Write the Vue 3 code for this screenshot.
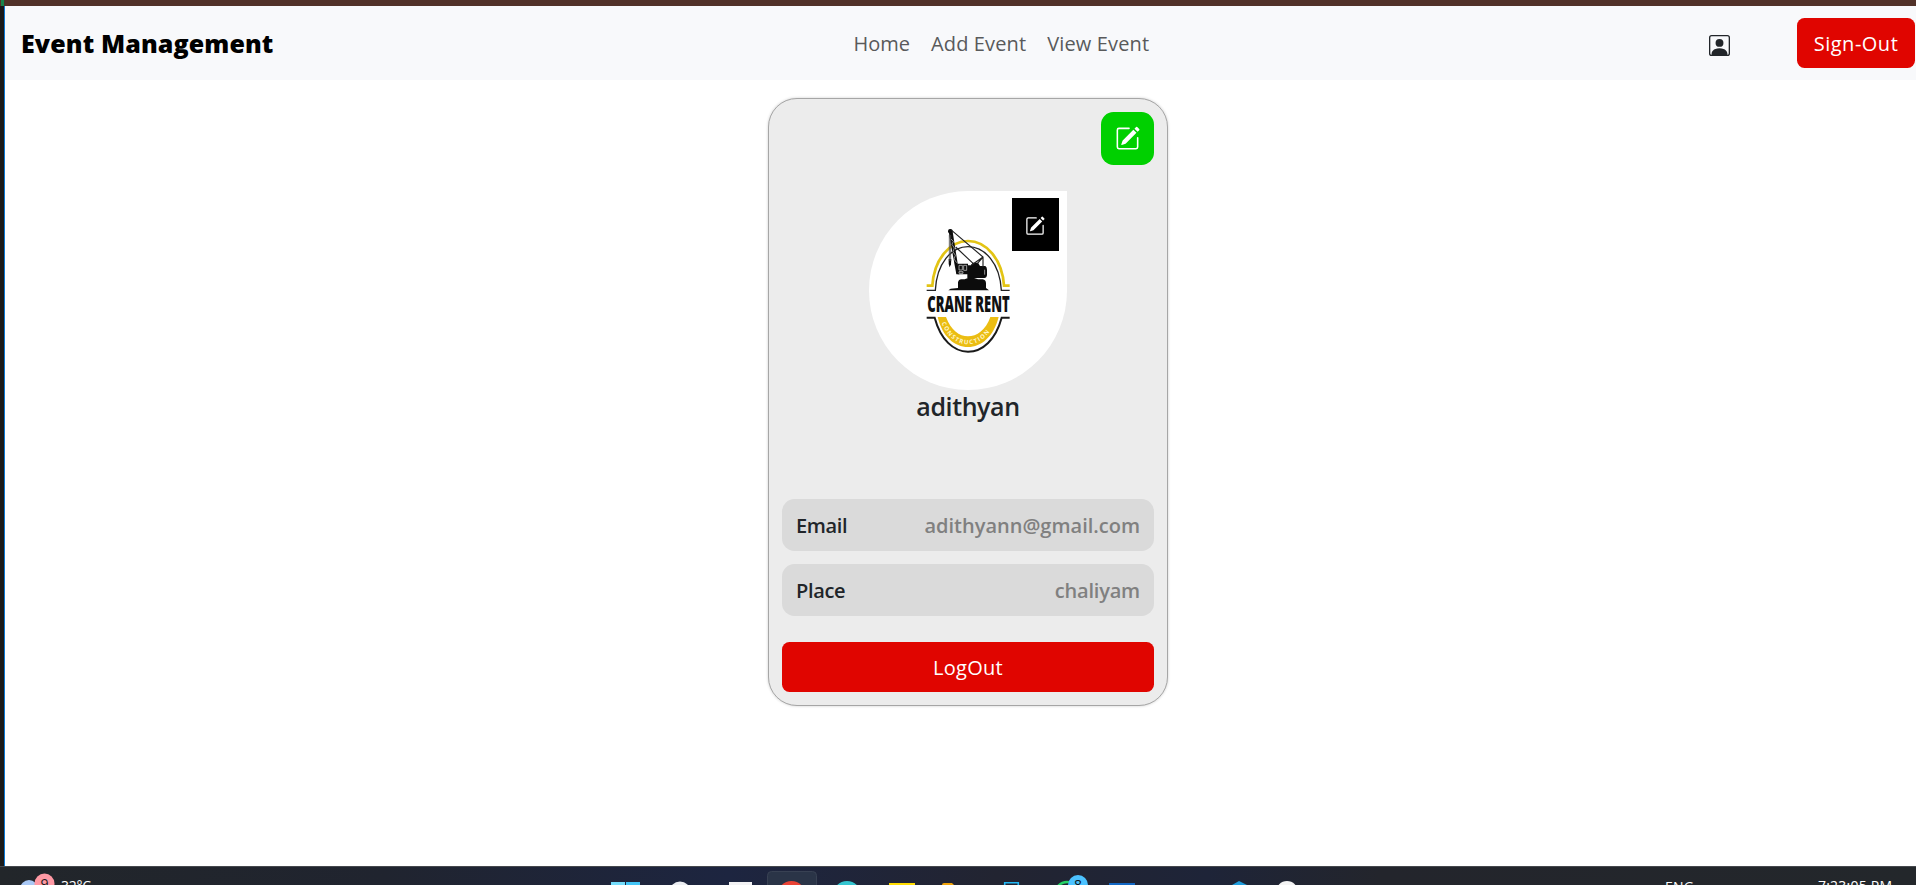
<script setup>
const links = [
  { label: 'Home', cls: 'home' },
  { label: 'Add Event', cls: 'add' },
  { label: 'View Event', cls: 'view' },
]
const fields = [
  { label: 'Email', value: 'adithyann@gmail.com', cls: 'email' },
  { label: 'Place', value: 'chaliyam', cls: 'place' },
]
</script>

<template>
  <div class="screen">
    <div class="tabstrip"><i class="tab-mark"></i></div>
    <div class="middle">
      <div class="edge"></div>
      <main class="page">
        <nav class="navbar">
          <span class="brand">Event Management</span>
          <div class="links">
            <a v-for="l in links" :key="l.label" :class="l.cls">{{ l.label }}</a>
          </div>
          <div class="account">
            <svg class="person" viewBox="0 0 16 16" fill="currentColor">
              <path d="M11 6a3 3 0 1 1-6 0 3 3 0 0 1 6 0" />
              <path d="M2 0a2 2 0 0 0-2 2v12a2 2 0 0 0 2 2h12a2 2 0 0 0 2-2V2a2 2 0 0 0-2-2zm12 1a1 1 0 0 1 1 1v12a1 1 0 0 1-1 1v-1c0-1-1-4-6-4s-6 3-6 4v1a1 1 0 0 1-1-1V2a1 1 0 0 1 1-1z" />
            </svg>
            <button class="btn signout"><span>Sign-Out</span></button>
          </div>
        </nav>

        <section class="card">
          <button class="edit">
            <svg viewBox="0 0 16 16" fill="currentColor">
              <path d="M15.502 1.94a.5.5 0 0 1 0 .706L14.459 3.69l-2-2L13.502.646a.5.5 0 0 1 .707 0l1.293 1.293zm-1.75 2.456-2-2L4.939 9.21a.5.5 0 0 0-.121.196l-.805 2.414a.25.25 0 0 0 .316.316l2.414-.805a.5.5 0 0 0 .196-.12l6.813-6.814z" />
              <path fill-rule="evenodd" d="M1 13.5A1.5 1.5 0 0 0 2.5 15h11a1.5 1.5 0 0 0 1.5-1.5v-6a.5.5 0 0 0-1 0v6a.5.5 0 0 1-.5.5h-11a.5.5 0 0 1-.5-.5v-11a.5.5 0 0 1 .5-.5H9a.5.5 0 0 0 0-1H2.5A1.5 1.5 0 0 0 1 2.5z" />
            </svg>
          </button>
          <div class="avatar">
            <svg class="logo" viewBox="-123 -72 594 597">
              <g fill="none">
                <path d="M50 212H67C72 132 120 78 174 78S277 132 282 212H299" stroke="#e3c414" stroke-width="8" />
                <path d="M50 226H76C80 145 124 95 174 95S270 145 274 226H299" stroke="#222" stroke-width="4" />
                <path d="M50 308H74C92 374 130 410 174 410S257 374 275 308H299" stroke="#1a1a1a" stroke-width="6" />
              </g>
              <path d="M83 306H108C122 345 148 364 174 364S228 345 241 306H266C251 365 214 396 174 396S97 365 83 306Z" fill="#ebbd12" />
              <path id="band" d="M92 318C110 364 140 388 174 388S240 362 257 316" fill="none" />
              <text class="band-text" fill="#fff6c8"><textPath href="#band" startOffset="6" textLength="186">CONSTRUCTION</textPath></text>
              <g fill="#0c0c0c">
                <path d="M115 226 122 221 144 219V202Q146 193 154 193H164L176 188H190L204 193H218Q228 195 228 205V219L237 226Z" />
                <path d="M142 146H174V151H183L188 143H204L210 153H226Q231 156 231 164V180Q230 189 223 189H172L172 178H143Z" />
                <path d="M116 45Q124 38 128 50L148 178H139L118 62Z" />
                <path d="M116 132H124L123 148L119 157L116 147Z" />
                <circle cx="121" cy="49" r="7" />
              </g>
              <g fill="none" stroke="#222" stroke-width="2">
                <path d="M125 46 219 126V156M137 96 190 146M219 126 202 146M219 126 184 151" stroke-width="3.5" />
                <path d="M118 60V138M122 60V138" stroke="#444" stroke-width="2.5" />
                <path d="M123 72 130 79 126 88 133 99 129 110 136 121 132 132 140 143" stroke="#ccc" stroke-width="2" />
                <path d="M147 151H157V165H147ZM161 151H170V166H161ZM147 170H159V175H147ZM224 164V179" stroke="#ddd" />
              </g>
              <text class="logo-text" x="52" y="291" textLength="247" lengthAdjust="spacingAndGlyphs">CRANE RENT</text>
            </svg>
            <button class="photo-edit">
              <svg viewBox="0 0 16 16" fill="currentColor">
                <path d="M15.502 1.94a.5.5 0 0 1 0 .706L14.459 3.69l-2-2L13.502.646a.5.5 0 0 1 .707 0l1.293 1.293zm-1.75 2.456-2-2L4.939 9.21a.5.5 0 0 0-.121.196l-.805 2.414a.25.25 0 0 0 .316.316l2.414-.805a.5.5 0 0 0 .196-.12l6.813-6.814z" />
                <path fill-rule="evenodd" d="M1 13.5A1.5 1.5 0 0 0 2.5 15h11a1.5 1.5 0 0 0 1.5-1.5v-6a.5.5 0 0 0-1 0v6a.5.5 0 0 1-.5.5h-11a.5.5 0 0 1-.5-.5v-11a.5.5 0 0 1 .5-.5H9a.5.5 0 0 0 0-1H2.5A1.5 1.5 0 0 0 1 2.5z" />
              </svg>
            </button>
          </div>
          <h2 class="name">adithyan</h2>
          <div class="fields">
            <div v-for="f in fields" :key="f.label" class="field" :class="f.cls">
              <span class="label">{{ f.label }}</span>
              <span class="value">{{ f.value }}</span>
            </div>
          </div>
          <button class="btn logout"><span>LogOut</span></button>
        </section>
      </main>
    </div>

    <footer class="taskbar">
      <svg width="1916" height="19" viewBox="0 866 1916 19">
        <circle cx="29" cy="889" r="9" fill="#a9c8f5" />
        <circle cx="44.5" cy="883.5" r="10" fill="#ff99a4" />
        <text x="40.5" y="889" font-size="14" fill="#1c1c1c">9</text>
        <text x="61" y="891" font-size="14" fill="#fff" textLength="30">32°C</text>
        <path d="M611 882H625V885H611Z" fill="#74dcfb" />
        <path d="M626 882H640V885H626Z" fill="#42c5f7" />
        <circle cx="680" cy="892" r="10.5" fill="#eceef2" />
        <path d="M729 882H752V885H729Z" fill="#f2f2f4" />
        <rect x="767.5" y="871.5" width="49" height="20" rx="4" fill="#2a3447" stroke="#384153" />
        <circle cx="791.5" cy="895" r="14" fill="#ea4335" />
        <circle cx="847" cy="895" r="14" fill="#35c5d0" />
        <path d="M889 883H915V885H889Z" fill="#ffdc00" />
        <path d="M942 885Q942 883 944 883H952L954 885Z" fill="#f0a30a" />
        <path d="M1004.7 885V882.7H1018.3V885" fill="none" stroke="#22b8f5" stroke-width="1.6" />
        <circle cx="1067" cy="894" r="12" fill="none" stroke="#25d366" stroke-width="2.5" />
        <circle cx="1078" cy="885" r="10" fill="#4cc2ff" />
        <text x="1074" y="889.5" font-size="14" fill="#101820">8</text>
        <path d="M1109 883H1135V885H1109Z" fill="#1267c4" />
        <path d="M1232 885 1239 881 1247 885Z" fill="#1f9ede" />
        <circle cx="1287" cy="892" r="11" fill="#f4f4f4" />
        <text x="1665" y="891.5" font-size="14" fill="#fff" textLength="29">ENG</text>
        <text x="1818" y="891" font-size="14" fill="#fff" textLength="74">7:23:05 PM</text>
      </svg>
    </footer>
  </div>
</template>

<style>
body {
  margin: 0;
  background: #fff;
}
</style>

<style scoped>
.screen {
  width: 1916px;
  height: 885px;
  display: flex;
  flex-direction: column;
  overflow: hidden;
  font-family: 'Open Sans', 'Noto Sans', sans-serif;
  font-size: 20px;
  line-height: 30px;
  color: #212529;
}
.tabstrip {
  flex: none;
  height: 6px;
  background: #513229;
}
.tab-mark {
  display: block;
  width: 3px;
  height: 6px;
  margin-left: 1px;
  background: #17834c;
}
.middle {
  flex: none;
  height: 860px;
  display: flex;
}
.edge {
  box-sizing: border-box;
  width: 5px;
  background: #1a1a1a;
  border-right: 1px solid #0a78d6;
}
.page {
  flex: 1;
  display: flex;
  flex-direction: column;
  align-items: center;
}
.navbar {
  box-sizing: border-box;
  width: 100%;
  height: 74px;
  padding: 0 1px 0 16px;
  background: #f8f9fb;
  display: grid;
  grid-template-columns: 832.5px 1fr auto;
  align-items: center;
}
.brand {
  font-size: 25px;
  font-weight: 800;
  letter-spacing: 0.12px;
  color: #000;
  white-space: nowrap;
}
.links {
  display: flex;
  gap: 21px;
  padding-top: 2px;
  color: #595a5b;
}
.add {
  letter-spacing: 0.12px;
}
.view {
  letter-spacing: 0.14px;
}
.links a,
.btn span,
.name,
.field span {
  white-space: nowrap;
}
.account {
  display: flex;
  align-items: center;
  gap: 67px;
}
.person {
  width: 21px;
  height: 21px;
  margin-top: 4px;
}
.btn {
  border: 0;
  padding: 2px 0 0;
  height: 50px;
  border-radius: 7.5px;
  background: #e00500;
  color: #fff;
  font: inherit;
}
.signout {
  width: 118px;
  letter-spacing: 0.5px;
}
.card {
  box-sizing: border-box;
  width: 400px;
  height: 608px;
  margin: 18px 0 0 15px;
  padding: 13px;
  border: 1px solid #a6a6a6;
  border-radius: 29px;
  background: #ececec;
  box-shadow: 0 0 3px rgba(0, 0, 0, 0.2);
  display: flex;
  flex-direction: column;
  align-items: center;
  align-self: center;
}
.edit {
  align-self: flex-end;
  width: 53px;
  height: 53px;
  padding: 0;
  border: 0;
  border-radius: 12.5px;
  background: #00d000;
  color: #fff;
  display: grid;
  place-items: center;
}
.edit svg {
  width: 25px;
  height: 25px;
}
.avatar {
  position: relative;
  width: 198px;
  height: 199px;
  margin-top: 26px;
  border-radius: 50% 0 50% 50%;
  background: #fff;
}
.logo {
  display: block;
  width: 198px;
  height: 199px;
}
.logo-text {
  font: 800 70px 'Open Sans', sans-serif;
  fill: #111;
}
.band-text {
  font: 700 18px 'Open Sans', sans-serif;
}
.photo-edit {
  position: absolute;
  top: 7px;
  right: 8px;
  width: 47px;
  height: 53px;
  padding: 3px 1px 0 0;
  border: 0;
  background: #000;
  color: #fff;
  display: grid;
  place-items: center;
}
.photo-edit svg {
  width: 20px;
  height: 20px;
}
.name {
  margin: 1px 0 1px;
  font-size: 25px;
  line-height: 30px;
  font-weight: 600;
  letter-spacing: -0.4px;
}
.fields {
  width: 100%;
  margin-top: 77px;
  display: flex;
  flex-direction: column;
  gap: 13px;
}
.field {
  box-sizing: border-box;
  height: 52px;
  padding: 2px 14px 0;
  border-radius: 12.5px;
  background: #dadada;
  display: flex;
  align-items: center;
  justify-content: space-between;
  font-weight: 600;
}
.label {
  letter-spacing: -0.35px;
}
.value {
  color: #808080;
}
.place .value {
  letter-spacing: -0.2px;
}
.logout {
  width: 100%;
  margin-top: 26px;
  letter-spacing: 0.25px;
}
.taskbar {
  box-sizing: border-box;
  height: 19px;
  border-top: 1px solid #45484d;
  background: linear-gradient(90deg, #22262a 0%, #20242f 20%, #1d2540 38%, #222431 52%, #1e2438 63%, #23252c 72%, #23272b 100%);
}
.taskbar svg {
  display: block;
  margin-top: -1px;
  font-family: 'Open Sans', 'Noto Sans', sans-serif;
}
</style>
